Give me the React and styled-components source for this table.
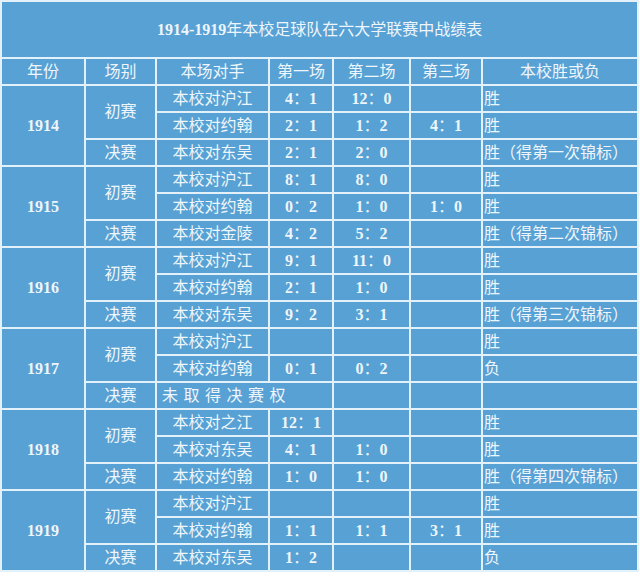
import React from "react";
import styled, { createGlobalStyle } from "styled-components";

const Global = createGlobalStyle`
  html, body { margin: 0; padding: 0; background: #ffffff; }
  body { font-family: "Liberation Serif", "Noto Sans CJK SC", serif; }
`;

const BLUE = "#58a1d4";
const LINE = "#e3f1fa";
const INK = "#eef6fb";

const Table = styled.table`
  border-collapse: collapse;
  table-layout: fixed;
  width: 639px;
  margin: 0;
  background: ${BLUE};
  color: ${INK};
  font-family: "Liberation Serif", "Noto Sans CJK SC", serif;
  font-size: 16px;
  line-height: 1;
`;

const Col = styled.col`
  width: ${(p) => p.$w}px;
`;

const TitleCell = styled.th`
  height: 55px;
  padding: 0;
  border: 2px solid ${LINE};
  font-weight: 400;
  font-size: 16px;
  text-align: center;
  vertical-align: middle;
`;

const HeadCell = styled.th`
  height: 25px;
  padding: 0;
  border: 2px solid ${LINE};
  font-weight: 400;
  text-align: center;
  vertical-align: middle;
`;

const Cell = styled.td`
  height: 25px;
  padding: 0 ${(p) => (p.$align === "left" ? "1px" : "0")};
  border: 2px solid ${LINE};
  text-align: ${(p) => p.$align || "center"};
  vertical-align: middle;
  white-space: nowrap;
  font-weight: ${(p) => (p.$num ? 700 : 400)};
  letter-spacing: ${(p) => (p.$spread ? "5.5px" : "0")};
  padding-left: ${(p) => (p.$spread ? "5px" : undefined)};
`;

const Num = styled.span`
  font-weight: 700;
`;

const Colon = styled.span`
  font-weight: 400;
`;

function Score({ value }) {
  if (!value) return null;
  const [a, b] = value.split("：");
  return (
    <>
      <Num>{a}</Num>
      <Colon>：</Colon>
      <Num>{b}</Num>
    </>
  );
}

const groups = [
  {
    year: "1914",
    rows: [
      ["初赛", "本校对沪江", "4：1", "12：0", "", "胜"],
      [null, "本校对约翰", "2：1", "1：2", "4：1", "胜"],
      ["决赛", "本校对东吴", "2：1", "2：0", "", "胜（得第一次锦标）"],
    ],
  },
  {
    year: "1915",
    rows: [
      ["初赛", "本校对沪江", "8：1", "8：0", "", "胜"],
      [null, "本校对约翰", "0：2", "1：0", "1：0", "胜"],
      ["决赛", "本校对金陵", "4：2", "5：2", "", "胜（得第二次锦标）"],
    ],
  },
  {
    year: "1916",
    rows: [
      ["初赛", "本校对沪江", "9：1", "11：0", "", "胜"],
      [null, "本校对约翰", "2：1", "1：0", "", "胜"],
      ["决赛", "本校对东吴", "9：2", "3：1", "", "胜（得第三次锦标）"],
    ],
  },
  {
    year: "1917",
    rows: [
      ["初赛", "本校对沪江", "", "", "", "胜"],
      [null, "本校对约翰", "0：1", "0：2", "", "负"],
      ["决赛", "未取得决赛权", "SPAN", "", "", ""],
    ],
  },
  {
    year: "1918",
    rows: [
      ["初赛", "本校对之江", "12：1", "", "", "胜"],
      [null, "本校对东吴", "4：1", "1：0", "", "胜"],
      ["决赛", "本校对约翰", "1：0", "1：0", "", "胜（得第四次锦标）"],
    ],
  },
  {
    year: "1919",
    rows: [
      ["初赛", "本校对沪江", "", "", "", "胜"],
      [null, "本校对约翰", "1：1", "1：1", "3：1", "胜"],
      ["决赛", "本校对东吴", "1：2", "", "", "负"],
    ],
  },
];

const widths = [84, 71, 113, 64, 77, 72, 156];
const heads = ["年份", "场别", "本场对手", "第一场", "第二场", "第三场", "本校胜或负"];

export default function App() {
  return (
    <>
      <Global />
      <Table>
        <colgroup>
          {widths.map((w, i) => (
            <Col key={i} $w={w} />
          ))}
        </colgroup>
        <thead>
          <tr>
            <TitleCell colSpan={7}>
              <Num>1914-1919</Num>年本校足球队在六大学联赛中战绩表
            </TitleCell>
          </tr>
          <tr>
            {heads.map((h) => (
              <HeadCell key={h}>{h}</HeadCell>
            ))}
          </tr>
        </thead>
        <tbody>
          {groups.map((g) =>
            g.rows.map((r, i) => {
              const spanned = r[2] === "SPAN";
              return (
                <tr key={g.year + i}>
                  {i === 0 && (
                    <Cell rowSpan={3} $num>
                      {g.year}
                    </Cell>
                  )}
                  {r[0] !== null && <Cell rowSpan={r[0] === "初赛" ? 2 : 1}>{r[0]}</Cell>}
                  {spanned ? (
                    <Cell colSpan={2} $align="left" $spread>
                      {r[1]}
                    </Cell>
                  ) : (
                    <>
                      <Cell>{r[1]}</Cell>
                      <Cell>
                        <Score value={r[2]} />
                      </Cell>
                    </>
                  )}
                  <Cell>
                    <Score value={r[3]} />
                  </Cell>
                  <Cell>
                    <Score value={r[4]} />
                  </Cell>
                  <Cell $align="left">{r[5]}</Cell>
                </tr>
              );
            })
          )}
        </tbody>
      </Table>
    </>
  );
}
